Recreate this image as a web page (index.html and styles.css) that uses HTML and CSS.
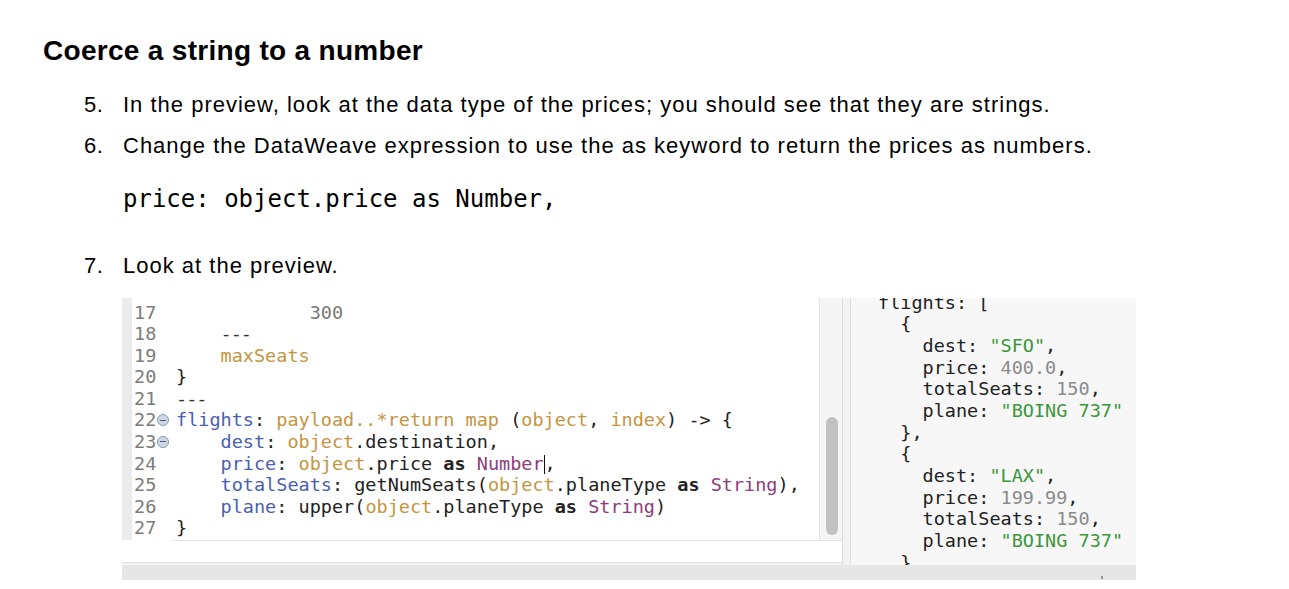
FILE: index.html
```html
<!DOCTYPE html>
<html>
<head>
<meta charset="utf-8">
<title>Coerce a string to a number</title>
<link rel="stylesheet" href="styles.css">
</head>
<body>
<h2 class="title">Coerce a string to a number</h2>
<div class="steps">
  <div class="step"><span class="num">5.</span><span class="txt">In the preview, look at the data type of the prices; you should see that they are strings.</span></div>
  <div class="step"><span class="num">6.</span><span class="txt">Change the DataWeave expression to use the as keyword to return the prices as numbers.</span></div>
  <div class="snippet">price: object.price as Number,</div>
  <div class="step s7"><span class="num">7.</span><span class="txt">Look at the preview.</span></div>
</div>
<div class="shot">
  <div class="panes">
    <div class="left">
      <div class="edit-row">
        <div class="editor">
          <div class="cl"><span class="ln">17</span><span class="code">            <span class="n">300</span></span></div>
          <div class="cl"><span class="ln">18</span><span class="code">    <span class="d">---</span></span></div>
          <div class="cl"><span class="ln">19</span><span class="code">    <span class="g">maxSeats</span></span></div>
          <div class="cl"><span class="ln">20</span><span class="code">}</span></div>
          <div class="cl"><span class="ln">21</span><span class="code"><span class="d">---</span></span></div>
          <div class="cl"><span class="ln">22<span class="fold"></span></span><span class="code"><span class="k">flights</span>: <span class="g">payload..*return map</span> (<span class="g">object</span>, <span class="g">index</span>) -&gt; {</span></div>
          <div class="cl"><span class="ln">23<span class="fold"></span></span><span class="code">    <span class="k">dest</span>: <span class="g">object</span>.destination,</span></div>
          <div class="cl"><span class="ln">24</span><span class="code">    <span class="k">price</span>: <span class="g">object</span>.price <b class="kw">as</b> <span class="p">Number</span><span class="caret"></span>,</span></div>
          <div class="cl"><span class="ln">25</span><span class="code">    <span class="k">totalSeats</span>: getNumSeats(<span class="g">object</span>.planeType <b class="kw">as</b> <span class="p">String</span>),</span></div>
          <div class="cl"><span class="ln">26</span><span class="code">    <span class="k">plane</span>: upper(<span class="g">object</span>.planeType <b class="kw">as</b> <span class="p">String</span>)</span></div>
          <div class="cl"><span class="ln">27</span><span class="code">}</span></div>
        </div>
        <div class="vscroll"><div class="thumb"></div></div>
      </div>
      <div class="hstrip"><div class="hline"></div></div>
    </div>
    <div class="split"></div>
    <div class="preview">
      <div class="out">
        <div class="ol">flights: [</div>
        <div class="ol">  {</div>
        <div class="ol">    dest: <span class="s">"SFO"</span>,</div>
        <div class="ol">    price: <span class="v">400.0</span>,</div>
        <div class="ol">    totalSeats: <span class="v">150</span>,</div>
        <div class="ol">    plane: <span class="s">"BOING 737"</span></div>
        <div class="ol">  },</div>
        <div class="ol">  {</div>
        <div class="ol">    dest: <span class="s">"LAX"</span>,</div>
        <div class="ol">    price: <span class="v">199.99</span>,</div>
        <div class="ol">    totalSeats: <span class="v">150</span>,</div>
        <div class="ol">    plane: <span class="s">"BOING 737"</span></div>
        <div class="ol">  }</div>
      </div>
    </div>
  </div>
  <div class="bottombar"><span class="dot"></span></div>
</div>
</body>
</html>
```
FILE: styles.css
```css
html, body {
  margin: 0;
  padding: 0;
  background: #ffffff;
}
body {
  font-family: "Liberation Sans", Arial, sans-serif;
  color: #000;
}
.title {
  margin: 35px 0 0 43px;
  font-size: 28px;
  line-height: 32px;
  letter-spacing: 0.3px;
  font-weight: bold;
}
.steps {
  margin: 18px 0 0 0;
}
.step {
  display: flex;
  font-size: 22px;
  letter-spacing: 1px;
  line-height: 40.5px;
  height: 40.5px;
}
.num {
  width: 39px;
  padding-left: 84px;
  flex: none;
  letter-spacing: 0.5px;
}
.snippet {
  margin: 13px 0 0 123px;
  font-family: "DejaVu Sans Mono", "Liberation Mono", monospace;
  font-size: 24px;
  line-height: 40px;
  height: 40px;
  white-space: pre;
}
.s7 {
  margin-top: 26.5px;
}
.shot {
  margin: 11.5px 0 0 122px;
  width: 1014px;
  height: 282px;
  display: flex;
  flex-direction: column;
}
.panes {
  display: flex;
  height: 267px;
  background: #f4f4f4;
}
.left {
  width: 721px;
  display: flex;
  flex-direction: column;
  border-right: 1px solid #dcdcdc;
  box-sizing: border-box;
}
.edit-row {
  display: flex;
  height: 242px;
}
.editor {
  width: 698px;
  box-sizing: border-box;
  border-left: 10px solid #ebebeb;
  border-right: 1px solid #e1e1e1;
  background: #ffffff;
  padding-top: 4px;
  overflow: hidden;
  font-family: "DejaVu Sans Mono", "Liberation Mono", monospace;
  font-size: 18.5px;
  color: #222;
}
.cl {
  display: flex;
  height: 21.6px;
  line-height: 21.6px;
  white-space: pre;
}
.ln {
  width: 44px;
  padding-left: 2px;
  box-sizing: border-box;
  color: #7b7b7b;
  flex: none;
  display: flex;
  align-items: center;
}
.fold {
  width: 10px;
  height: 10px;
  margin-left: 1px;
  border: 1px solid #8a9ab0;
  border-radius: 50%;
  background: #cdd8e4;
  position: relative;
}
.fold::after {
  content: "";
  position: absolute;
  left: 2px;
  right: 2px;
  top: 4.5px;
  height: 1px;
  background: #4e5d73;
}
.code { flex: none; }
.k { color: #4a5db2; }
.g { color: #c4953f; }
.p { color: #8e3a7c; }
.n { color: #777777; }
.d { color: #333; letter-spacing: -1px; }
.kw { color: #222; font-weight: bold; }
.caret {
  display: inline-block;
  width: 1px;
  height: 19px;
  background: #111;
  vertical-align: -4px;
}
.vscroll {
  width: 22px;
  background: #f5f5f5;
  padding-top: 119px;
  box-sizing: border-box;
}
.thumb {
  width: 12px;
  height: 118px;
  margin-left: 6px;
  border-radius: 6px;
  background: #c2c2c2;
}
.hstrip {
  height: 22px;
  background: #ffffff;
  border-bottom: 1px solid #e0e0e0;
}
.hline {
  margin-left: 51px;
  border-top: 1px solid #e4e4e4;
}
.split {
  width: 7px;
  background: #f3f3f3;
  border-right: 1px solid #dedede;
}
.preview {
  flex: 1;
  background: #f7f7f7;
  overflow: hidden;
  padding-left: 27px;
}
.out {
  margin-top: -6px;
  font-family: "DejaVu Sans Mono", "Liberation Mono", monospace;
  font-size: 18.5px;
  color: #222;
}
.ol {
  height: 21.7px;
  line-height: 21.7px;
  white-space: pre;
}
.s { color: #3a973a; }
.v { color: #8a8a8a; }
.bottombar {
  height: 15px;
  background: #e6e6e6;
  display: flex;
  justify-content: flex-end;
  align-items: flex-end;
  padding-right: 33px;
}
.dot {
  width: 2px;
  height: 3px;
  margin-bottom: 1px;
  background: #9a9a9a;
}
```
